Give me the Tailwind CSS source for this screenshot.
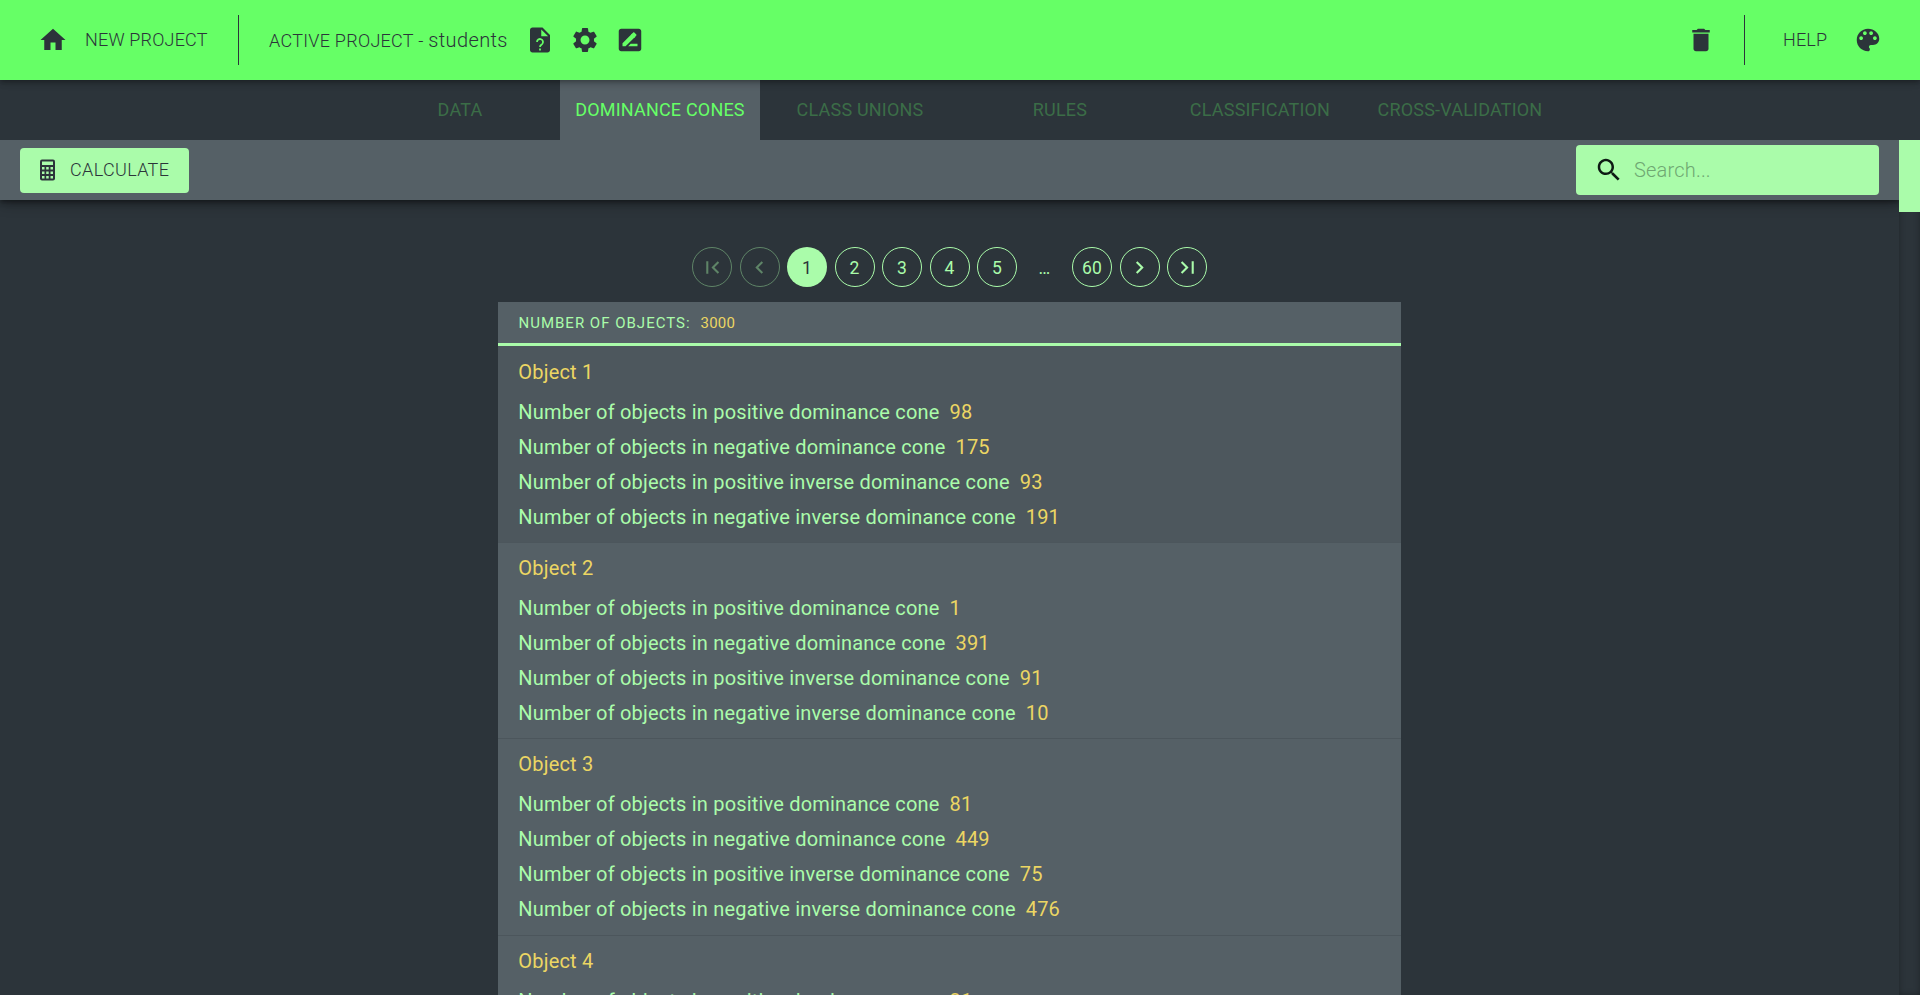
<!DOCTYPE html>
<html lang="en">
<head>
<meta charset="utf-8">
<title>Dominance cones</title>
<script src="https://cdn.jsdelivr.net/npm/@tailwindcss/browser@4"></script>
</head>
<body class="h-screen overflow-hidden bg-[#2c343a] font-['Roboto',sans-serif] tracking-[0.19px] text-[#2c343a]">
<div class="flex h-[995px] flex-col">
  <header class="relative z-30 flex h-20 shrink-0 items-center bg-[#66ff66] px-6 shadow-[0px_2px_4px_-1px_rgba(0,0,0,0.2),0px_4px_5px_0px_rgba(0,0,0,0.14),0px_1px_10px_0px_rgba(0,0,0,0.12)]">
    <div class="flex w-[58px] justify-center"><svg class="size-[30px]" viewBox="0 0 24 24" fill="currentColor"><path d="M10 20v-6h4v6h5v-8h3L12 3 2 12h3v8z"/></svg></div>
    <span class="ml-[3px] w-[153px] text-lg font-light">NEW PROJECT</span>
    <div class="h-[50px] w-px bg-[#2c343a]"></div>
    <div class="ml-[30px] flex w-[256px] items-baseline whitespace-pre font-light"><span class="text-lg tracking-[0.28px]">ACTIVE PROJECT - </span><span class="text-xl tracking-[0.38px]">students</span></div>
    <div class="flex gap-[15px]">
      <svg class="size-[30px]" viewBox="0 0 24 24" fill="currentColor"><path fill-rule="evenodd" d="M14 2H6c-1.100 0-2 .9-2 2v16c0 1.100.89 2 2 2h12c1.100 0 2-.9 2-2V8l-6-6zM13 9V3.500L18.500 9z"/><path d="M9.600 13.600a2.400 2.400 0 1 1 4.200 1.600c-.8.8-1.800 1.100-1.800 2.300M12 18.700v1.600" fill="none" stroke="#66ff66" stroke-width="1.400"/></svg>
      <svg class="size-[30px]" viewBox="0 0 24 24" fill="currentColor"><path d="M19.140 12.940c.04-.3.06-.61.06-.94 0-.32-.02-.64-.07-.94l2.030-1.580c.18-.14.23-.41.12-.61l-1.920-3.320c-.12-.22-.37-.29-.59-.22l-2.390.96c-.5-.38-1.030-.7-1.620-.94l-.36-2.540c-.04-.24-.24-.41-.48-.41h-3.840c-.24 0-.43.17-.47.41l-.36 2.540c-.59.24-1.130.57-1.620.94l-2.390-.96c-.22-.08-.47 0-.59.22L2.740 8.870c-.12.21-.08.47.12.61l2.030 1.580c-.05.3-.09.63-.09.94s.02.64.07.94l-2.030 1.580c-.18.14-.23.41-.12.61l1.920 3.320c.12.22.37.29.59.22l2.390-.96c.5.38 1.030.7 1.620.94l.36 2.540c.05.24.24.41.48.41h3.840c.24 0 .44-.17.47-.41l.36-2.540c.59-.24 1.130-.56 1.620-.94l2.390.96c.22.08.47 0 .59-.22l1.920-3.320c.12-.22.07-.47-.12-.61l-2.010-1.580zM12 15.600c-1.980 0-3.600-1.620-3.600-3.600s1.620-3.600 3.600-3.600 3.600 1.620 3.600 3.600-1.620 3.600-3.600 3.600z"/></svg>
      <svg class="size-[30px]" viewBox="0 0 24 24" fill="currentColor"><path fill-rule="evenodd" d="M18.990 3H5c-1.100 0-2 .9-2 2v14c0 1.100.9 2 2 2h14c1.100 0 2-.9 2-2L20.990 5c0-1.100-.9-2-2-2zM8.440 17H6v-2.500l7.540-7.470 2.480 2.480L8.440 17zm8.620-8.530l-1.200 1.190-2.480-2.470 1.200-1.200c.23-.23.61-.23.85 0l1.630 1.630c.23.23.23.61 0 .85zM18 17h-7.500l2-2H18v2z"/><path fill="#66ff66" d="M12.900 7.600l.9-.9 2.600 2.600-.9.9z"/></svg>
    </div>
    <svg class="ml-auto size-[30px]" viewBox="0 0 24 24" fill="currentColor"><path d="M6 19c0 1.100.9 2 2 2h8c1.100 0 2-.9 2-2V7H6v12zM19 4h-3.500l-1-1h-5l-1 1H5v2h14V4z"/></svg>
    <div class="ml-7 h-[50px] w-px bg-[#2c343a]"></div>
    <span class="ml-[38px] w-[70px] text-lg font-light">HELP</span>
    <svg class="mr-[13px] size-[30px]" viewBox="0 0 24 24" fill="currentColor"><path d="M12 3c-4.970 0-9 4.030-9 9s4.030 9 9 9c.83 0 1.500-.67 1.500-1.500 0-.39-.15-.74-.39-1.010-.23-.26-.38-.61-.38-.99 0-.83.67-1.500 1.500-1.500H16c2.760 0 5-2.240 5-5 0-4.420-4.030-8-9-8zm-5.500 9c-.83 0-1.500-.67-1.500-1.500S5.670 9 6.500 9 8 9.670 8 10.500 7.330 12 6.500 12zm3-4C8.670 8 8 7.330 8 6.500S8.670 5 9.500 5s1.500.67 1.500 1.500S10.330 8 9.500 8zm5 0c-.83 0-1.500-.67-1.500-1.500S13.670 5 14.500 5s1.500.67 1.500 1.500S15.330 8 14.500 8zm3 4c-.83 0-1.500-.67-1.500-1.500S16.670 9 17.500 9s1.500.67 1.500 1.500-.67 1.500-1.500 1.500z"/></svg>
  </header>
  <nav class="flex h-[60px] shrink-0 justify-center text-lg text-[#3b6d47]">
    <div class="flex w-[200px] items-center justify-center">DATA</div>
    <div class="flex w-[200px] items-center justify-center bg-[#556066] text-[#66ff66]">DOMINANCE CONES</div>
    <div class="flex w-[200px] items-center justify-center">CLASS UNIONS</div>
    <div class="flex w-[200px] items-center justify-center">RULES</div>
    <div class="flex w-[200px] items-center justify-center">CLASSIFICATION</div>
    <div class="flex w-[200px] items-center justify-center">CROSS-VALIDATION</div>
  </nav>
  <div class="flex min-h-0 flex-1">
    <main class="flex min-w-0 flex-1 flex-col overflow-hidden">
      <div class="relative z-10 flex h-[60px] shrink-0 items-center justify-between bg-[#556066] px-5 shadow-[0px_3px_3px_-2px_rgba(0,0,0,0.2),0px_3px_4px_0px_rgba(0,0,0,0.14),0px_1px_8px_0px_rgba(0,0,0,0.12),0px_4px_12px_0px_rgba(0,0,0,0.3)]">
        <button class="flex h-[45px] w-[169px] items-center rounded bg-[#aafcaa] pl-4 text-lg font-light">
          <svg class="h-[22px] w-[23px]" viewBox="0 0 23 22"><rect x="4" y="0.500" width="15" height="21" rx="2" fill="#2c343a"/><g fill="#aafcaa"><path d="M6 2.500h11v3.500H6zM6 8h2.500v2.500H6zM10.200 8h2.500v2.500h-2.500zM14.500 8H17v2.500h-2.500zM6 12.500h2.500V15H6zM10.200 12.500h2.500V15h-2.500zM14.500 12.500H17V15h-2.500zM6 17h2.500v2.500H6zM10.200 17h2.500v2.500h-2.500zM14.500 17H17v2.500h-2.500z"/></g></svg>
          <span class="ml-[11px] tracking-[0.35px]">CALCULATE</span>
        </button>
        <div class="flex h-[50px] w-[303px] items-center rounded bg-[#aafcaa] pl-[18px]">
          <svg class="size-[30px] text-[#0e1a14]" viewBox="0 0 24 24" fill="currentColor"><path d="M15.500 14h-.79l-.28-.27C15.410 12.590 16 11.110 16 9.500 16 5.910 13.090 3 9.500 3S3 5.910 3 9.500 5.910 16 9.500 16c1.610 0 3.090-.59 4.230-1.570l.27.28v.79l5 4.990L20.490 19l-4.990-5zm-6 0C7.010 14 5 11.990 5 9.500S7.010 5 9.500 5 14 7.010 14 9.500 11.990 14 9.500 14z"/></svg>
          <span class="ml-[10px] text-xl font-light text-[#6fa872]">Search...</span>
        </div>
      </div>
      <div class="mt-[47px] flex h-10 shrink-0 justify-center gap-[7.500px] text-[17.5px] text-[#aafcaa]">
        <div class="flex size-10 items-center justify-center rounded-full border border-current opacity-40"><svg class="size-[25px]" viewBox="0 0 24 24" fill="currentColor"><path d="M18.410 16.590L13.820 12l4.590-4.590L17 6l-6 6 6 6zM6 6h2v12H6z"/></svg></div>
        <div class="flex size-10 items-center justify-center rounded-full border border-current opacity-40"><svg class="size-[25px]" viewBox="0 0 24 24" fill="currentColor"><path d="M15.410 7.410L14 6l-6 6 6 6 1.410-1.410L10.830 12z"/></svg></div>
        <div class="flex size-10 items-center justify-center rounded-full bg-[#aafcaa] pt-0.5 text-[#2c343a]">1</div>
        <div class="flex size-10 items-center justify-center rounded-full border border-current pt-0.5">2</div>
        <div class="flex size-10 items-center justify-center rounded-full border border-current pt-0.5">3</div>
        <div class="flex size-10 items-center justify-center rounded-full border border-current pt-0.5">4</div>
        <div class="flex size-10 items-center justify-center rounded-full border border-current pt-0.5">5</div>
        <div class="flex size-10 items-center justify-center pt-0.5">…</div>
        <div class="flex size-10 items-center justify-center rounded-full border border-current pt-0.5">60</div>
        <div class="flex size-10 items-center justify-center rounded-full border border-current"><svg class="size-[25px]" viewBox="0 0 24 24" fill="currentColor"><path d="M10 6L8.590 7.410 13.170 12l-4.580 4.590L10 18l6-6z"/></svg></div>
        <div class="flex size-10 items-center justify-center rounded-full border border-current"><svg class="size-[25px]" viewBox="0 0 24 24" fill="currentColor"><path d="M5.590 7.410L10.180 12l-4.590 4.590L7 18l6-6-6-6zM16 6h2v12h-2z"/></svg></div>
      </div>
      <section class="mx-auto mt-[15px] w-[903px] shrink-0 bg-[#556066] text-xl text-[#aafcaa]">
        <div class="flex h-11 border-b-[3px] border-[#aafcaa] px-[20.5px] pt-[9px] text-[15px] leading-6"><span class="tracking-[1px]">NUMBER OF OBJECTS:</span><span class="ml-[10px] text-[#ecd663]">3000</span></div>
        <div id="list"></div>
      </section>
    </main>
    <aside class="w-[21px] shrink-0 bg-[#2c343a] shadow-[inset_0_0_6px_rgba(0,0,0,0.3)]"><div class="h-[72px] bg-[#aafcaa]"></div></aside>
  </div>
</div>
<script>
const rows = [[98,175,93,191],[1,391,91,10],[81,449,75,476],[31,200,40,210]];
const kinds = ['positive','negative','positive inverse','negative inverse'];
document.getElementById('list').innerHTML = rows.map((r, i) => `
  <div class="h-[196.5px] border-b-[1px] border-[#4c565c] px-[20.3px] ${i === 0 ? 'bg-[#4d575d] pt-[10.5px]' : 'pt-[10px]'}">
    <div class="mb-[5px] h-[35px] leading-[30px] text-[#ecd663]">Object ${i + 1}</div>
    ${r.map((n, k) => `<div class="flex h-[35px] leading-[30px]"><span>Number of objects in ${kinds[k]} dominance cone</span><span class="ml-[10px] text-[#ecd663]">${n}</span></div>`).join('')}
  </div>`).join('');
</script>
</body>
</html>
